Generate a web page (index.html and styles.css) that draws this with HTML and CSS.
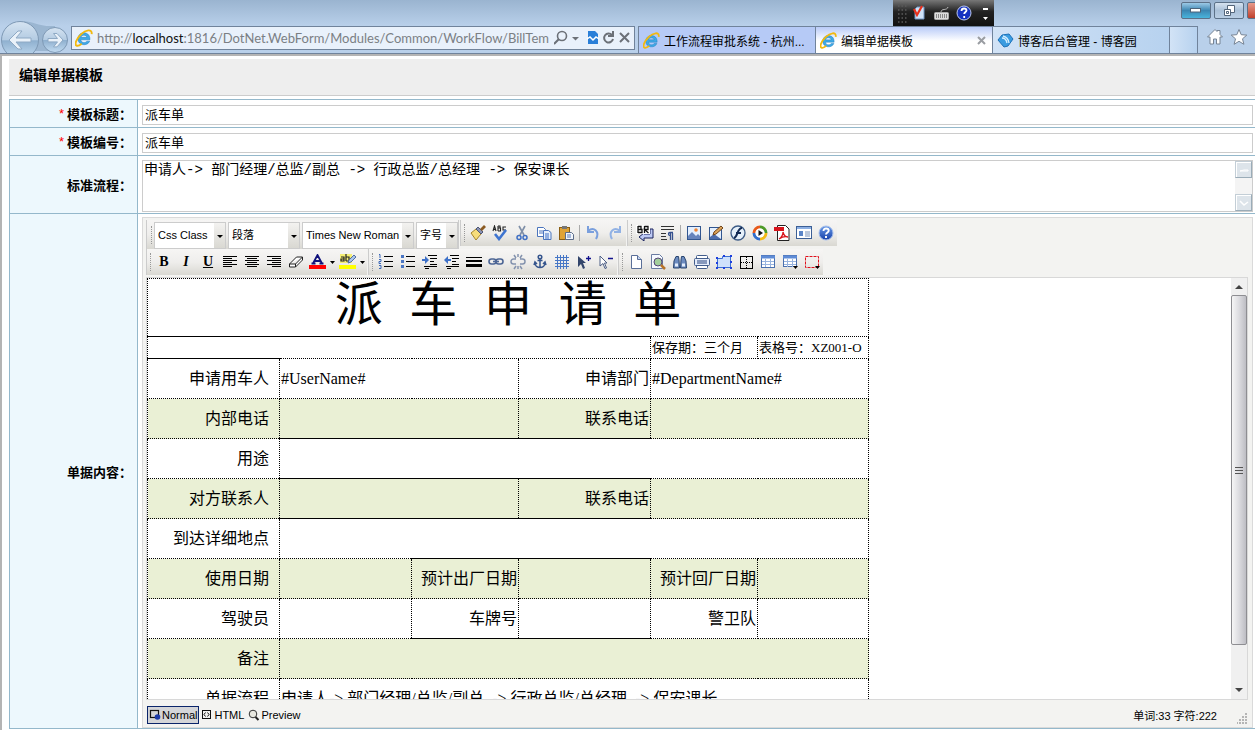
FILE: index.html
```html
<!DOCTYPE html>
<html lang="zh-CN">
<head>
<meta charset="utf-8">
<title>编辑单据模板</title>
<link rel="stylesheet" href="styles.css">
</head>
<body>
<svg class="defs" aria-hidden="true">
  <defs>
    <linearGradient id="ballGlass" x1="0" y1="0" x2="0" y2="1"><stop offset="0" stop-color="#d6e4f2"/><stop offset=".5" stop-color="#b3cbe2"/><stop offset=".52" stop-color="#8fb0cf"/><stop offset="1" stop-color="#c3dcf2"/></linearGradient>
    <linearGradient id="helpFill" x1="0" y1="0" x2="0" y2="1"><stop offset="0" stop-color="#6a9ae8"/><stop offset="1" stop-color="#1540a8"/></linearGradient>
    <symbol id="ie" viewBox="0 0 16 16"><path d="M13.300 9.600H5.200c.2 2.700 4 3.400 5.300 1.200h2.600C11.200 15.600 2.600 15 2.600 8.700c0-7.100 11.300-7.400 10.700.9zM5.300 7.400h5.200C10.200 4.900 5.700 4.800 5.300 7.400z" fill="#3fa9e6" stroke="#1878bd" stroke-width=".4"/><path d="M14.800 4.500c.7-5-5.400-3.800-9.300.1C1.300 8.700-.6 13.400 1.200 14.600c1.100.8 3.100-.2 4.700-1.500" fill="none" stroke="#f2b90f" stroke-width="1.700"/></symbol>
  </defs>
</svg>

<header class="chrome">
  <nav class="history">
    <svg width="71" height="32" viewBox="0 0 71 32">
      <path d="M20 1c14 0 18 6 35 5v25H20z" fill="#9bb6d1"/>
      <circle cx="20" cy="20" r="18.500" fill="url(#ballGlass)" stroke="#7e99b5"/>
      <circle cx="55" cy="20" r="12.500" fill="url(#ballGlass)" stroke="#7e99b5"/>
      <path d="M9 20l9-9h4l-6 7h15v4H16l6 7h-4z" fill="#e9f1f9" stroke="#8ea9c4"/>
      <path d="M63 20l-6-6.500h-3.500l4 5H48v3.400h9.500l-4 5H57z" fill="#e9f1f9" stroke="#8ea9c4"/>
    </svg>
  </nav>
  <div class="address">
    <svg width="18" height="18"><use href="#ie"/></svg>
    <div class="url" role="textbox" contenteditable="true" aria-label="地址" spellcheck="false">http://<span class="host">localhost</span>:1816/DotNet.WebForm/Modules/Common/WorkFlow/BillTem</div>
    <svg width="78" height="16" viewBox="0 0 78 16" fill="none" stroke="#6c7178" stroke-width="2">
      <circle cx="8" cy="6" r="4.500" stroke-width="1.600"/><path d="M5 9l-5 5"/><path d="M18 7h7l-3.500 3.500z" fill="#6c7178" stroke="none"/>
      <path d="M34 1h7l3 3v10H34z" fill="#2a7fd8" stroke="none"/><path d="M33 9l3-2 3 3 3-3 3 2" stroke="#fff" stroke-width="1.500"/>
      <path d="M58 5a4.500 4.500 0 1 0 1 4M59 1v5h-5"/><path d="M66 3l9 9M75 3l-9 9"/>
    </svg>
  </div>
  <div class="tabs">
    <button class="tab tab-group"><svg width="17" height="17"><use href="#ie"/></svg><span>工作流程审批系统 - 杭州...</span></button>
    <button class="tab tab-active"><svg width="17" height="17"><use href="#ie"/></svg><span>编辑单据模板</span><svg width="9" height="9" viewBox="0 0 9 9"><path d="M1 1l7 7M8 1L1 8" stroke="#9a9da2" stroke-width="2"/></svg></button>
    <button class="tab"><svg width="17" height="17" viewBox="0 0 17 17"><path d="M5 3l7-1 4 5-5 7-4 1-6-7z" fill="#3a9ce0" stroke="#1c71b8"/><path d="M6 4q5 1 6 7M5 6q4 0 5 5" fill="none" stroke="#d5efff" stroke-width="1.300"/></svg><span>博客后台管理 - 博客园</span></button>
    <button class="tab tab-new" aria-label="新建选项卡"></button>
  </div>
  <div class="tools">
    <svg width="18" height="18" viewBox="0 0 18 18"><path d="M1.500 9L9 1.500l2 2V2.500h3v4L16.500 9H14v7h-3.500v-5h-3v5H4V9z" fill="#fff" stroke="#778494"/></svg>
    <svg width="18" height="18" viewBox="0 0 18 18"><path d="M9 1.500l2.200 5.200 5.600.4-4.300 3.700 1.400 5.500L9 13.300l-4.900 3 1.400-5.500L1.200 7.100l5.600-.4z" fill="#fff" stroke="#778494"/></svg>
  </div>
  <div class="langbar">
    <svg width="101" height="26" viewBox="0 0 101 26">
      <path d="M5 6h9M5 10h9M5 14h9M5 18h9M5 22h9" stroke="#5b5b5b" stroke-width="1.500" stroke-dasharray="1.500 2"/>
      <path d="M24 7h7v12h-9V9z" fill="#cfe2f8" stroke="#6f94c2"/><path d="M21 9l3 6 5-9" fill="none" stroke="#e8311c" stroke-width="2.200"/>
      <rect x="41.500" y="12.500" width="14" height="7" rx="1" fill="#ddd" stroke="#aaa"/><path d="M43 15h11M43 17h11" stroke="#333" stroke-dasharray="1 1"/><path d="M48 12c0-4 6-1 7-5" fill="none" stroke="#bbb"/>
      <circle cx="71" cy="13" r="7" fill="#1532c0" stroke="#b9c6ee"/><path d="M68.500 11c0-3.500 5-3 5-.5 0 1.500-2.300 1.500-2.300 3.500M71.200 16v2" fill="none" stroke="#fff" stroke-width="1.800"/>
      <path d="M90 8h5v2h-5zM90 17h5l-2.500 3z" fill="#fff"/>
    </svg>
  </div>
  <div class="winctl">
    <button class="win win-min" aria-label="最小化"><svg width="12" height="6"><rect x=".5" y=".5" width="10" height="3.500" fill="#fff" stroke="#4d6378"/></svg></button>
    <button class="win" aria-label="还原"><svg width="13" height="12" viewBox="0 0 13 12" fill="#fff" stroke="#53657a"><path d="M4.500.5h7v7h-7z"/><path d="M1.500 4.500h6v6h-6zM3.500 6.500h2v2h-2z"/></svg></button>
    <button class="win win-close" aria-label="关闭"></button>
  </div>
</header>

<main class="page">
  <h1 class="page-title">编辑单据模板</h1>
  <form class="form">
    <label class="name" for="title"><span class="req">*</span>模板标题：</label>
    <div class="field"><input class="box" id="title" value="派车单"></div>
    <label class="name" for="code"><span class="req">*</span>模板编号：</label>
    <div class="field"><input class="box" id="code" value="派车单"></div>
    <label class="name" for="flow">标准流程：</label>
    <div class="field field-flow">
      <div class="area">
        <textarea id="flow">申请人-&gt; 部门经理/总监/副总 -&gt; 行政总监/总经理 -&gt; 保安课长</textarea>
        <div class="mini-scroll">
          <button type="button" disabled aria-label="向上"><svg width="10" height="6"><path d="M1 4l4-1h4v1z" stroke="#fff" fill="none"/></svg></button>
          <button type="button" disabled aria-label="向下"><svg width="10" height="6"><path d="M1 1l4 4 4-3" stroke="#fff" stroke-width="1.500" fill="none"/></svg></button>
        </div>
      </div>
    </div>
    <div class="name" id="contentName">单据内容：</div>
    <div class="field field-editor">
      <section class="editor" aria-labelledby="contentName">
        <div class="bar">
          <div class="group group-selects">
            <span class="pick pick-s"><select aria-label="样式"><option>Css Class</option></select></span>
            <span class="pick pick-s"><select aria-label="段落"><option>段落</option></select></span>
            <span class="pick pick-l"><select aria-label="字体"><option>Times New Roman</option></select></span>
            <span class="pick pick-xs"><select aria-label="字号"><option>字号</option></select></span>
          </div>
          <div class="group">
            <button type="button" aria-label="格式刷"><svg viewBox="0 0 16 16"><path d="M1 8l5-4 5 5-5 6z" fill="#f6dd7c" stroke="#a68428"/><path d="M6 4l2-2 5 5-2 2z" fill="#8a93b3" stroke="#4e5674"/><path d="M10 4l4-4 2 2-4 4z" fill="#8b5b22"/></svg></button>
            <button type="button" aria-label="拼写检查"><svg viewBox="0 0 16 16"><path d="M1 6l1.500-5L4 6M1.500 4.500h2M6 1v5M6 1h2v2H6h2.500v3H6M14 2h-3v3h3" fill="none" stroke="#222" stroke-width="1.100"/><path d="M3 9l4 5 7-9" fill="none" stroke="#3e74d0" stroke-width="2.600"/></svg></button>
            <button type="button" aria-label="剪切"><svg viewBox="0 0 16 16" fill="none"><path d="M5 1l5 9M11 1l-5 9" stroke="#7f8fa8" stroke-width="1.600"/><circle cx="5" cy="12.500" r="2" stroke="#3f6fc4" stroke-width="1.500"/><circle cx="11" cy="12.500" r="2" stroke="#3f6fc4" stroke-width="1.500"/></svg></button>
            <button type="button" aria-label="复制"><svg viewBox="0 0 16 16" stroke="#4a74bd"><path d="M1.500 2.500h6l2 2v7h-8z" fill="#fff"/><path d="M3 6h4M3 8h4"/><path d="M7.500 5.500h5l2.500 2v7H7.500z" fill="#e6effc"/><path d="M9 9h4M9 11h4M9 13h4" stroke="#3d6ec6"/></svg></button>
            <button type="button" aria-label="粘贴"><svg viewBox="0 0 16 16"><rect x="1.500" y="2.500" width="10" height="12" fill="#e0a336" stroke="#8a5d12"/><path d="M4 1h5v3H4z" fill="#777"/><path d="M7.500 7.500h6l2 2v5h-8z" fill="#f2f6fc" stroke="#5b6c8a"/><path d="M9 10h4M9 12h4" stroke="#5b7ab8"/></svg></button>
            <i class="sep"></i>
            <button type="button" aria-label="撤销"><svg viewBox="0 0 16 16" fill="none" stroke="#7a9fdd" stroke-width="2"><path d="M3 6c6-5 12 1 8 8M3 1v6h6"/></svg></button>
            <button type="button" aria-label="重做"><svg viewBox="0 0 16 16" fill="none" stroke="#92b2e4" stroke-width="2"><path d="M13 6C7 1 1 7 5 14M13 1v6H7"/></svg></button>
          </div>
          <div class="group">
            <button type="button" aria-label="换行"><svg class="w18" viewBox="0 0 18 16"><path d="M8 9h6V4h3v9H8v3l-5-4 5-4z" fill="#bcc9f4" stroke="#18215c"/><path d="M0 0h14v9H0z" fill="#fff"/><path d="M2 1v7M2 1.500h3v3H2h4v3H2M8.500 1v7M8.500 1.500h3.500v3H8.500l4 3.500" fill="none" stroke="#111" stroke-width="1.300"/></svg></button>
            <button type="button" aria-label="段落标记"><svg viewBox="0 0 16 16"><path d="M2 1.500h13M2 4.500h13M2 8.500h5M2 11.500h5M2 14.500h6" stroke="#333"/><path d="M14 7.500H11c-2 0-2 3 0 3M11.500 8v7M13.500 8v7" fill="none" stroke="#34508e" stroke-width="1.300"/></svg></button>
            <i class="sep"></i>
            <button type="button" aria-label="图片"><svg viewBox="0 0 16 16"><rect x="1.500" y="1.500" width="13" height="13" fill="#e4effe" stroke="#31558f"/><circle cx="10" cy="5" r="1.800" fill="#f08434"/><path d="M2 14v-3l4-4 4 4 2-2 2 2v3z" fill="#6583bc"/></svg></button>
            <button type="button" aria-label="编辑图片"><svg viewBox="0 0 16 16"><rect x="1.500" y="2.500" width="12" height="12" fill="#e4effe" stroke="#31558f"/><path d="M2 14v-2l4-3 7 5z" fill="#4b6cac"/><path d="M5 10l1-3 7-6 2 2-7 6z" fill="#dba35a" stroke="#70441a"/></svg></button>
            <button type="button" aria-label="Flash"><svg viewBox="0 0 16 16"><circle cx="8" cy="8" r="7" fill="#e6f0fa" stroke="#3d5b86" stroke-width="1.300"/><path d="M12 3C7 3 8 12 4 13M6 8h5" fill="none" stroke="#142b55" stroke-width="2"/></svg></button>
            <button type="button" aria-label="媒体"><svg viewBox="0 0 16 16" fill="none" stroke-width="3"><path d="M2 8A6 6 0 0 1 8 2" stroke="#e85a1b"/><path d="M8 2A6 6 0 0 1 14 8" stroke="#4e9b29"/><path d="M14 8A6 6 0 0 1 8 14" stroke="#f3ba16"/><path d="M8 14A6 6 0 0 1 2 8" stroke="#316dcc"/><circle cx="8" cy="8" r="4.500" fill="#fff" stroke="none"/><path d="M6.500 5l4.500 3-4.500 3z" fill="#111" stroke="none"/></svg></button>
            <button type="button" aria-label="PDF"><svg viewBox="0 0 16 16"><path d="M3.500.500h8l3.500 3.500v11.500H3.500z" fill="#fff" stroke="#222"/><path d="M0 2h10v4H0z" fill="#d8141c"/><path d="M5 14c3-2 4-4 4-7 1 4 3 5 5 5-3-1-6 0-9 2z" fill="none" stroke="#d8141c" stroke-width="1.300"/></svg></button>
            <button type="button" aria-label="文档"><svg viewBox="0 0 16 16"><rect x=".5" y="1.500" width="15" height="12" fill="#fff" stroke="#3c5f96"/><path d="M1 3h14" stroke="#8dafe3" stroke-width="2"/><path d="M3 6h4v5H3z" fill="#5c86c8"/><path d="M9 7h5M9 9h5M9 11h5" stroke="#7b92b8"/></svg></button>
            <button type="button" aria-label="帮助"><svg viewBox="0 0 16 16"><circle cx="8" cy="8" r="7" fill="url(#helpFill)" stroke="#a8c0ec"/><path d="M5.500 6c0-3.500 5.200-3 5.200-.3C10.700 7.500 8 7.500 8 9.500M8 11v2" fill="none" stroke="#fff" stroke-width="1.900"/></svg></button>
          </div>
        </div>
        <div class="bar bar-second">
          <div class="group">
            <button type="button" class="glyph glyph-b">B</button>
            <button type="button" class="glyph glyph-i">I</button>
            <button type="button" class="glyph glyph-u">U</button>
            <button type="button" aria-label="左对齐"><svg viewBox="0 0 16 16" stroke="#000"><path d="M1 2.500h14M1 4.500h9M1 6.500h14M1 8.500h9M1 10.500h14M1 12.500h9"/></svg></button>
            <button type="button" aria-label="居中"><svg viewBox="0 0 16 16" stroke="#000"><path d="M1 2.500h14M3 4.500h10M1 6.500h14M3 8.500h10M1 10.500h14M3 12.500h10"/></svg></button>
            <button type="button" aria-label="右对齐"><svg viewBox="0 0 16 16" stroke="#000"><path d="M1 2.500h14M6 4.500h9M1 6.500h14M6 8.500h9M1 10.500h14M6 12.500h9"/></svg></button>
            <button type="button" aria-label="清除格式"><svg viewBox="0 0 16 16" fill="#fff" stroke="#222"><path d="M1.500 10l7-7h6v3l-7 7h-6zM1.500 10h6l7-7M7.500 10v3"/></svg></button>
            <button type="button" class="wide" aria-label="文字颜色"><svg class="w26" viewBox="0 0 26 16"><path d="M4 9.500L8.500 1l4.500 8.500M6 7h5M2.500 9.500h4M10.500 9.500h4" fill="none" stroke="#10127c" stroke-width="1.800"/><path d="M0 11h17v4H0z" fill="#f00"/><path d="M21 7h5l-2.500 3z"/></svg></button>
            <button type="button" class="wide" aria-label="突出显示"><svg class="w26" viewBox="0 0 26 16"><path d="M1 0h12v9H1z" fill="#f5ef74"/><path d="M2 3h3v4H2V5h3M7 0v7M7 3h3v4H7" fill="none" stroke="#222" stroke-width="1.200"/><path d="M9 9l1-3 5-5 2 2-5 5z" fill="#a9c4ec" stroke="#526da0"/><path d="M0 11h17v4H0z" fill="#ff0"/><path d="M21 7h5l-2.500 3z"/></svg></button>
          </div>
          <div class="group">
            <button type="button" aria-label="编号"><svg viewBox="0 0 16 16" fill="none"><path d="M6 2.500h9M6 7.500h9M6 12.500h9" stroke="#000"/><path d="M1 .500h1V4M1 5.500h2v2H1v2h2M1 11.500h2v3H1" stroke="#3a67b8"/></svg></button>
            <button type="button" aria-label="项目符号"><svg viewBox="0 0 16 16"><path d="M6 2.500h9M6 7.500h9M6 12.500h9" stroke="#000"/><path d="M1 1h3v3H1zM1 6h3v3H1zM1 11h3v3H1z" fill="#4a76c4"/></svg></button>
            <button type="button" aria-label="增加缩进"><svg viewBox="0 0 16 16"><path d="M6 1.500h9M8 4.500h7M8 7.500h4M8 10.500h7M2 12.500h13M3 14.500h4" stroke="#000"/><path d="M0 5h3V2l4 4-4 4V7H0z" fill="#3d70c8"/></svg></button>
            <button type="button" aria-label="减少缩进"><svg viewBox="0 0 16 16"><path d="M6 1.500h9M8 4.500h7M8 7.500h4M8 10.500h7M2 12.500h13M3 14.500h4" stroke="#000"/><path d="M7 5H4V2L0 6l4 4V7h3z" fill="#3d70c8"/></svg></button>
            <button type="button" aria-label="水平线"><svg viewBox="0 0 16 16"><path d="M0 3h16v1H0zM0 6h16v2H0zM0 10h16v3H0z"/></svg></button>
            <button type="button" aria-label="链接"><svg viewBox="0 0 16 16" fill="none" stroke="#4d6695" stroke-width="1.600"><rect x="1" y="5" width="7" height="5" rx="2.500"/><rect x="8" y="5" width="7" height="5" rx="2.500"/><path d="M5 7.500h6"/></svg></button>
            <button type="button" aria-label="取消链接"><svg viewBox="0 0 16 16" fill="none" stroke="#8493ae" stroke-width="1.500"><path d="M6 5H3.500a2 2 0 0 0 0 5H6M10 5h2.500a2 2 0 0 1 0 5H10M4 1l2 3M8 0v3M12 1l-2 3M4 15l2-3M8 12v3M12 15l-2-3"/></svg></button>
            <button type="button" aria-label="锚点"><svg viewBox="0 0 16 16" fill="none" stroke="#35558d" stroke-width="1.500"><circle cx="8" cy="3" r="1.800"/><path d="M8 5v9M5.500 6.500h5M3 9c0 6 10 6 10 0M2 11l1-3 2 2M14 11l-1-3-2 2"/></svg></button>
            <button type="button" aria-label="网格"><svg viewBox="0 0 16 16" stroke="#4777c6"><path d="M1 3.500h14M1 6.500h14M1 9.500h14M1 12.500h14M3.500 1v14M6.500 1v14M9.500 1v14M12.500 1v14"/></svg></button>
            <button type="button" aria-label="选择"><svg viewBox="0 0 16 16"><path d="M2 2l8 7H7l2 5-2 1-2-5-3 3z" fill="#33456b"/><path d="M12.500 2v5M10 4.500h5" stroke="#11118c" stroke-width="1.300"/></svg></button>
            <button type="button" aria-label="取消选择"><svg viewBox="0 0 16 16"><path d="M2 2l7 7H6.500l2 5-1.500.5-2-5L2 12z" fill="#fff" stroke="#4d5f84"/><path d="M10 4.500h5" stroke="#11118c" stroke-width="1.500"/></svg></button>
          </div>
          <div class="group">
            <button type="button" aria-label="新建"><svg viewBox="0 0 16 16"><path d="M3.500 1.500h6l4 4v9h-10z" fill="#fff" stroke="#5a6f98"/><path d="M9.500 1.500v4h4" fill="#c4d4f0" stroke="#5a6f98"/></svg></button>
            <button type="button" aria-label="预览"><svg viewBox="0 0 16 16"><path d="M1.500.500h8l3 3v11h-11z" fill="#f6f9ff" stroke="#6a7ca2"/><circle cx="8" cy="8" r="4" fill="#a3cf9c" stroke="#547"/><path d="M11 11l4 4" stroke="#b77328" stroke-width="2.500"/></svg></button>
            <button type="button" aria-label="查找"><svg viewBox="0 0 16 16" fill="#6d8cc0" stroke="#29446f"><path d="M4 2.500h2.500L7 6l.5 8h-6l.5-7zM9.500 2.500H12L14 7l.5 7h-6L9 6z"/><path d="M3 9.500h3v3H3zM10 9.500h3v3h-3z" fill="#e3edfb" stroke="none"/></svg></button>
            <button type="button" aria-label="分页"><svg viewBox="0 0 16 16"><rect x="2.500" y="1.500" width="11" height="4" rx="1" fill="#fff" stroke="#425d8c"/><rect x="2.500" y="10.500" width="11" height="4" rx="1" fill="#fff" stroke="#425d8c"/><rect x=".5" y="4.500" width="15" height="7" rx="1" fill="#e4ecfa" stroke="#425d8c"/><path d="M3 7h10M3 9h10" stroke="#28457e"/></svg></button>
            <button type="button" aria-label="图层"><svg viewBox="0 0 16 16"><path d="M1.500 4.500h5v-2h8v11h-13z" fill="#cfe1fb" stroke="#3d6fd0"/><path d="M0 3h2v2H0zM14 1h2v2h-2zM0 13h2v2H0zM14 13h2v2h-2zM7 1h2v2H7zM7 13h2v2H7zM14 7h2v2h-2zM0 8h2v2H0z" fill="#1d3fe0"/></svg></button>
            <button type="button" aria-label="边框"><svg viewBox="0 0 16 16" fill="none" stroke="#000"><rect x="2.500" y="2.500" width="12" height="12"/><path d="M8.500 3v12M3 8.500h12" stroke-dasharray="1 1"/></svg></button>
            <button type="button" aria-label="插入表格"><svg viewBox="0 0 16 16"><rect x="1.500" y="1.500" width="13" height="12" fill="#fff" stroke="#4a70ae"/><path d="M1 3h14" stroke="#5e8bd6" stroke-width="3"/><path d="M2 7.500h12M2 10.500h12M5.500 5v8M10.500 5v8" stroke="#98b4df"/></svg></button>
            <button type="button" aria-label="表格菜单"><svg viewBox="0 0 16 16"><rect x="1.500" y="1.500" width="13" height="11" fill="#fff" stroke="#4a70ae"/><path d="M1 3h14" stroke="#5e8bd6" stroke-width="3"/><path d="M2 7.500h12M2 10.500h12M5.500 5v8M10.500 5v8" stroke="#98b4df"/><path d="M11 12h5l-2.500 3z"/></svg></button>
            <button type="button" aria-label="表单"><svg viewBox="0 0 16 16"><rect x="1.500" y="2.500" width="13" height="11" fill="none" stroke="#e0101c" stroke-dasharray="3 1"/><path d="M11 12h5l-2.500 3z"/></svg></button>
          </div>
        </div>

        <div class="doc">
          <div class="paper">
            <table class="bill">
              <colgroup><col class="c132"><col class="c132"><col class="c107"><col class="c132"><col class="c107"><col class="c111"></colgroup>
              <tr class="r-title"><td colspan="6">派&nbsp; 车&nbsp; 申&nbsp; 请&nbsp; 单</td></tr>
              <tr class="r-meta"><td colspan="4" class="top"></td><td>保存期：三个月</td><td>表格号：XZ001-O</td></tr>
              <tr><th class="top">申请用车人</th><td colspan="2">#UserName#</td><th>申请部门</th><td colspan="2">#DepartmentName#</td></tr>
              <tr class="alt"><th>内部电话</th><td colspan="2" class="bottom"></td><th class="bottom">联系电话</th><td colspan="2"></td></tr>
              <tr><th>用途</th><td colspan="5"></td></tr>
              <tr class="alt"><th>对方联系人</th><td colspan="2" class="top bottom"></td><th class="top bottom">联系电话</th><td colspan="2"></td></tr>
              <tr><th>到达详细地点</th><td colspan="5"></td></tr>
              <tr class="alt"><th>使用日期</th><td></td><th class="top">预计出厂日期</th><td class="top"></td><th>预计回厂日期</th><td></td></tr>
              <tr><th>驾驶员</th><td></td><th class="bottom">车牌号</th><td class="bottom"></td><th>警卫队</th><td></td></tr>
              <tr class="alt"><th>备注</th><td colspan="5"></td></tr>
              <tr><th>单据流程</th><td colspan="5">申请人-&gt; 部门经理/总监/副总&nbsp; -&gt; 行政总监/总经理&nbsp; -&gt; 保安课长</td></tr>
            </table>
          </div>
          <div class="scroll">
            <svg width="16" height="17"><path d="M4 11h8L8 7z" fill="#444"/></svg>
            <div class="thumb"><svg width="8" height="9"><path d="M0 1.500h8M0 4.500h8M0 7.500h8" stroke="#555"/></svg></div>
            <div class="track"></div>
            <svg width="16" height="17"><path d="M4 6h8l-4 4z" fill="#444"/></svg>
          </div>
        </div>

        <div class="status">
          <button type="button" class="mode mode-on"><svg width="12" height="12" viewBox="0 0 12 12"><rect x="1.500" y="1.500" width="8" height="7" fill="none" stroke="#111" stroke-width="1.200"/><circle cx="8.500" cy="8" r="2.800" fill="#1b3aa8"/></svg>Normal</button>
          <button type="button" class="mode"><svg width="12" height="12" viewBox="0 0 12 12" fill="none" stroke="#111"><rect x="1.500" y="1.500" width="8" height="8"/><path d="M4.500 3.500l-1.500 2 1.500 2M6.500 3.500l1.500 2-1.500 2"/></svg>HTML</button>
          <button type="button" class="mode"><svg width="12" height="12" viewBox="0 0 12 12"><circle cx="5" cy="5" r="3.800" fill="#e8e8e0" stroke="#333"/><path d="M7.500 8l3 3" stroke="#222" stroke-width="2"/></svg>Preview</button>
          <span class="count">单词:33 字符:222</span>
          <svg class="grip" width="11" height="11" viewBox="0 0 11 11" fill="#b5b5b5"><path d="M8 0h2v2H8zM5 3h2v2H5zM8 3h2v2H8zM2 6h2v2H2zM5 6h2v2H5zM8 6h2v2H8zM0 9h1v2H0zM2 9h2v2H2zM5 9h2v2H5zM8 9h2v2H8z"/></svg>
        </div>
      </section>
    </div>
  </form>
</main>
</body>
</html>
```
FILE: styles.css
```css
* { box-sizing: border-box; }
body {
  margin: 0;
  height: 100vh;
  display: flex;
  flex-direction: column;
  overflow: hidden;
  background: #fff;
  color: #000;
  font: 13px "Liberation Sans", "Noto Sans CJK SC", sans-serif;
}
button, input, select, textarea { font: inherit; color: inherit; margin: 0; }
button { background: none; border: 0; padding: 0; }
svg { flex: none; display: block; }
.defs { position: absolute; width: 0; height: 0; }

/* Browser frame */
.chrome {
  position: relative;
  flex: none;
  display: flex;
  align-items: flex-end;
  height: 56px;
  border-bottom: 2px solid #b4b4b4;
  background: linear-gradient(#9ab4d0, #b9d0ea 26px, #b9d0ea);
}
.chrome::after { content: ""; position: absolute; left: 0; right: 0; bottom: 0; height: 1px; background: #70839b; }
.history { align-self: flex-end; }
.history svg { height: 36px; width: 71px; }
.address {
  flex: 1;
  min-width: 0;
  display: flex;
  align-items: center;
  gap: 4px;
  height: 24px;
  margin-bottom: 4px;
  padding: 0 2px 0 3px;
  border: 1px solid #70839b;
  background: #e9f1fb;
}
.url { flex: 1; min-width: 0; white-space: nowrap; font: 13px Lato, "Noto Sans", sans-serif; color: #7b7f84; outline: 0; }
.host { color: #111; }
.tabs { display: flex; height: 27px; margin: 0 0 1px 3px; border: 1px solid #70839b; border-bottom: 0; }
.tab {
  display: flex;
  align-items: center;
  gap: 4px;
  width: 177px;
  padding: 0 6px 0 4px;
  border-right: 1px solid #70839b;
  background: linear-gradient(90deg, #d2e3f6, #b7d2ef);
  font: 12px "Liberation Sans", "Noto Sans CJK SC", sans-serif;
  white-space: nowrap;
}
.tab span { flex: 1; text-align: left; }
.tab-group { background: #b6caf6; }
.tab-active { background: linear-gradient(#b9cbf8, #fff 14px); }
.tab-new { width: 27px; border-right: 0; }
.tools { display: flex; gap: 6px; width: 57px; padding: 0 0 8px 8px; }
.langbar { position: absolute; top: 0; right: 261px; height: 26px; background: linear-gradient(#777, #222 45%, #111); }
.winctl { position: absolute; top: 2px; right: -22px; display: flex; gap: 3px; overflow: hidden; }
.win { display: flex; align-items: center; justify-content: center; width: 30px; height: 17px; border: 1px solid #5c7188; border-radius: 2px; background: linear-gradient(#d5e2f0, #a9c0d8 50%, #b9cee4); }
.win-min { background: linear-gradient(#9cc9e6, #3c86b2 50%, #49b4dc); }
.win-close { background: linear-gradient(#e79a8a, #c0402c); }

/* Page */
.page { flex: 1; min-height: 0; display: flex; flex-direction: column; padding: 3px 0 1px 7px; border-left: 2px solid #b4b4b4; }
.page-title { flex: none; margin: 0 0 3px; padding: 6px 10px 10px; border-bottom: 1px solid #ccc; background: #eee; font-size: 14px; line-height: 20px; }
.form {
  flex: 1;
  min-height: 0;
  display: grid;
  grid-template-columns: 129px minmax(0, 1fr);
  grid-template-rows: auto auto auto minmax(0, 1fr);
  border-top: 1px solid #94b8cb;
}
.name {
  display: flex;
  align-items: center;
  justify-content: flex-end;
  gap: 3px;
  padding-right: 5px;
  border: 1px solid #94b8cb;
  border-top: 0;
  background: #edf8fd;
  font-weight: bold;
}
.req { color: #f00; font-weight: normal; }
.field { padding: 5px 2px 2px 4px; border-bottom: 1px solid #94b8cb; }
.field-flow { padding: 4px 2px 1px 4px; }
.field-editor { min-height: 0; padding: 3px 2px 0 4px; }
.box { display: block; width: 100%; height: 20px; padding: 0 2px 4px; border: 1px solid #ccc; background: #fff; line-height: 14px; }
.area { display: flex; height: 52px; border: 1px solid #ccc; }
.area textarea { flex: 1; min-width: 0; padding: 0 1px; border: 0; resize: none; overflow: hidden; outline: 0; font: 14px/18px "Liberation Mono", "Noto Sans CJK SC", monospace; }
.mini-scroll { display: flex; flex-direction: column; justify-content: space-between; width: 17px; background: #f4f4f4; }
.mini-scroll button { display: grid; place-items: center; height: 17px; border: 1px solid; border-color: #c3ced6 #9aacb8 #9aacb8 #c3ced6; background: #dde4ea; box-shadow: inset 1px 1px #fff; }

/* Rich text editor */
.editor { height: 100%; display: flex; flex-direction: column; padding: 2px 4px 0 3px; border: 1px solid #dadada; background: #f3f3f1; }
.bar { flex: none; display: flex; align-items: flex-start; gap: 1px; min-height: 27px; }
.bar-second { min-height: 28px; }
.group {
  display: flex;
  align-items: center;
  height: 26px;
  padding-left: 6px;
  background: linear-gradient(#f6f5f4, #efeeec 50%, #d9d8d2);
  border-left: 1px solid #ccc;
}
.group::before { content: ""; height: 18px; margin-left: -3px; margin-right: 2px; border-left: 1px dotted #999; }
.group-selects { height: 29px; gap: 2px; padding: 1px 0 0 7px; border-right: 1px solid #ccc; }
.group-selects::before { margin-right: 0; }
.pick { position: relative; }
.pick::after { content: ""; position: absolute; right: 3px; top: 13px; border: 3px solid transparent; border-top-color: #000; pointer-events: none; }
.pick select {
  appearance: none;
  display: block;
  width: 100%;
  height: 27px;
  padding: 0 12px 0 3px;
  border: 1px solid #ccc;
  border-radius: 0;
  background: linear-gradient(#f3f2f0, #d9d8d2) right / 11px 100% no-repeat #fff;
  font: 11px "Liberation Sans", "Noto Sans CJK SC", sans-serif;
}
.pick-s { width: 72px; }
.pick-l { width: 112px; }
.pick-xs { width: 42px; }
.group button { display: grid; place-items: center; width: 22px; height: 24px; }
.group button svg { width: 16px; height: 16px; }
.group button .w18 { width: 18px; }
.group .wide { width: 30px; }
.group .wide .w26 { width: 26px; }
.group .glyph { font: bold 14px "Liberation Serif", serif; }
.group .glyph-i { font-style: italic; }
.group .glyph-u { text-decoration: underline; }
.sep { width: 1px; height: 16px; margin: 0 2px; background: #aaa; }

.doc { flex: 1; min-height: 0; display: flex; border: 1px solid #d8d8d8; background: #fff; }
.paper { flex: 1; min-width: 0; overflow: hidden; }
.bill { table-layout: fixed; width: 722px; border-collapse: collapse; font: 16px "Liberation Serif", "Noto Sans CJK SC", serif; }
.c132 { width: 132px; }
.c107 { width: 107px; }
.c111 { width: 111px; }
.bill tr { height: 40px; }
.bill th, .bill td { padding: 0 1px; border: 1px dotted #000; text-align: left; font-weight: normal; line-height: 20px; white-space: nowrap; }
.bill th { text-align: right; }
.bill th:first-child { padding-right: 10px; }
.bill .top { border-top-style: solid; }
.bill .bottom { border-bottom-style: solid; }
.bill .alt { background: #eaf0d5; }
.bill .r-title { height: 58px; }
.bill .r-title td { padding-bottom: 5px; text-align: center; font: 48px/50px "Liberation Sans", "Noto Sans CJK SC", sans-serif; }
.bill .r-meta { height: 22px; font-size: 13px; }
.scroll { display: flex; flex-direction: column; width: 16px; background: #f0f0f0; }
.thumb { flex: 351; display: grid; place-items: center; border: 1px solid #8e8e92; border-radius: 2px; background: linear-gradient(90deg, #f6f6f6, #dcdce0 50%, #bdbdc3); }
.track { flex: 37; }

.status { flex: none; display: flex; align-items: center; height: 27px; padding: 2px 0 0 1px; font: 11px "Liberation Sans", "Noto Sans CJK SC", sans-serif; }
.mode { display: flex; align-items: center; gap: 1px; height: 18px; padding: 0 1px; border: 1px solid transparent; }
.mode-on { border-color: #0a246a; background: #d4d5d8; }
.count { margin-left: auto; margin-right: 20px; }
.grip { align-self: flex-end; margin-bottom: 3px; }
```
